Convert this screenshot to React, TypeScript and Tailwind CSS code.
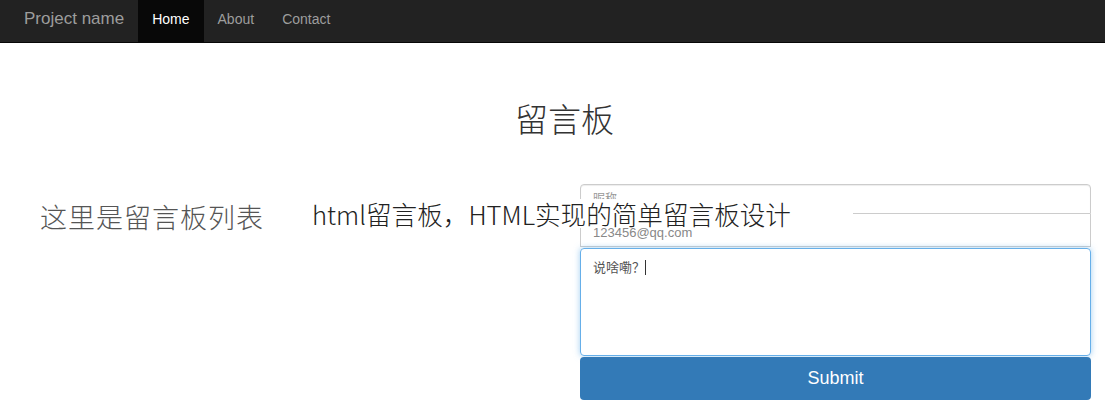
const cjk = "font-['Noto_Sans_CJK_SC','Noto_Sans',sans-serif]";

const links = [
  { label: "Home", active: true },
  { label: "About", active: false },
  { label: "Contact", active: false },
];

const Navbar = () => (
  <nav className="flex h-[43px] items-stretch border-b border-[#080808] bg-[#222] font-['Liberation_Sans',Arial,sans-serif]">
    <a className="flex items-center pb-[4px] pl-[24px] pr-[14px] text-[17px] text-[#9d9d9d]">Project name</a>
    {links.map((link) => (
      <a
        key={link.label}
        className={
          link.active
            ? "flex items-center bg-[#080808] px-[14px] pb-[4px] text-[14px] text-white"
            : "flex items-center px-[14px] pb-[4px] text-[14px] text-[#9d9d9d]"
        }
      >
        {link.label}
      </a>
    ))}
  </nav>
);

const MessageForm = () => (
  <div className={`flex w-[511px] flex-col ${cjk}`}>
    <div className="flex h-[30px] items-start rounded-t-[4px] border border-[#ccc] px-[12px] pt-[6px] text-[12px] leading-[14px] text-[#999] shadow-[inset_0_1px_1px_rgba(0,0,0,0.075)]">
      昵称
    </div>
    <div className="flex h-[33px] items-center border border-t-0 border-[#ccc] px-[12px] pt-[6px] font-['Liberation_Sans',Arial,sans-serif] text-[13px] text-[#888]">
      123456@qq.com
    </div>
    <div className="mt-px h-[108px] rounded-[4px] border border-[#66afe9] px-[12px] pt-[8px] text-[13px] text-[#555] shadow-[0_0_6px_rgba(102,175,233,0.6)]">
      说啥嘞？<span className="inline-block h-[15px] w-px translate-y-[3px] bg-[#333]" />
    </div>
    <button className="mt-px h-[43px] rounded-[4px] bg-[#337ab7] font-['Liberation_Sans',Arial,sans-serif] text-[18px] text-white">
      Submit
    </button>
  </div>
);

const App = () => {
  return (
    <div className="relative min-h-[413px] overflow-hidden bg-white">
      <Navbar />
      <h1 className={`mt-[55px] pl-[24px] text-center text-[33px] leading-[40px] font-light text-[#333] ${cjk}`}>
        留言板
      </h1>
      <div className="mt-[46px] flex">
        <div className="w-[580px] pl-[40px] pt-[15px]">
          <p className={`text-[27px] leading-[36px] tracking-[1px] text-[#555] font-light ${cjk}`}>这里是留言板列表</p>
        </div>
        <MessageForm />
      </div>
      <div
        className={`absolute left-[300px] top-[199px] h-[29px] w-[553px] bg-white pl-[12px] text-[25.6px] leading-[29px] font-light text-[#222] ${cjk}`}
      >
        html留言板，HTML实现的简单留言板设计
      </div>
    </div>
  );
};

export default App;
